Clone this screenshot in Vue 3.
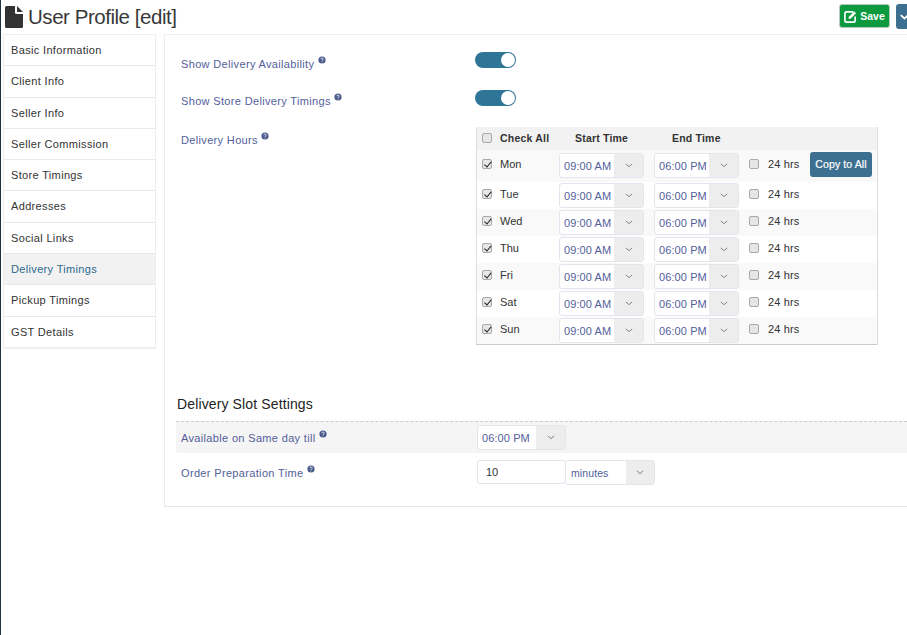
<script setup>
const tabs = ['Basic Information','Client Info','Seller Info','Seller Commission','Store Timings','Addresses','Social Links','Delivery Timings','Pickup Timings','GST Details']
const days = ['Mon','Tue','Wed','Thu','Fri','Sat','Sun']
</script>

<template>
  <div class="page">
    <header class="top">
      <h1 class="title">
        <svg class="file" viewBox="0 0 18 22" width="18" height="22"><path fill="#333" d="M0 1.500A1.500 1.500 0 0 1 1.500 0H10v6.500A1.500 1.500 0 0 0 11.500 8H18v12.500a1.500 1.500 0 0 1-1.500 1.500h-15A1.500 1.500 0 0 1 0 20.500z"/><path fill="#333" d="M12 0l6 6h-6z"/></svg>
        User Profile [edit]
      </h1>
      <div class="actions">
        <button class="save">
          <svg viewBox="0 0 14 14" width="13" height="13"><path fill="none" stroke="#fff" stroke-width="1.800" d="M10 2H2.500A1.500 1.500 0 0 0 1 3.500v8A1.500 1.500 0 0 0 2.500 13h8a1.500 1.500 0 0 0 1.500-1.500V7"/><path fill="#fff" d="M5 7.500L11 1.500l2 2-6 6H5z"/></svg>
          Save
        </button>
        <button class="more">
          <svg viewBox="0 0 12 8" width="11" height="8"><path fill="none" stroke="#fff" stroke-width="2.400" d="M1 1.500l5 4.500 5-4.500"/></svg>
        </button>
      </div>
    </header>

    <div class="body">
      <nav class="side">
        <a v-for="t in tabs" :key="t" class="tab" :class="{ active: t === 'Delivery Timings' }">{{ t }}</a>
      </nav>

      <main class="panel">
        <div class="setting first">
          <label class="lbl">Show Delivery Availability <svg class="q" viewBox="0 0 10 10"><circle cx="5" cy="5" r="4.500" fill="#4a5a8c"/><path d="M3.500 4a1.500 1.400 0 1 1 2.200 1.200Q5 5.600 5 6.200M5 7v1" stroke="#fff" fill="none" stroke-width="1"/></svg></label>
          <span class="toggle"><i></i></span>
        </div>
        <div class="setting second">
          <label class="lbl">Show Store Delivery Timings <svg class="q" viewBox="0 0 10 10"><circle cx="5" cy="5" r="4.500" fill="#4a5a8c"/><path d="M3.500 4a1.500 1.400 0 1 1 2.200 1.200Q5 5.600 5 6.200M5 7v1" stroke="#fff" fill="none" stroke-width="1"/></svg></label>
          <span class="toggle"><i></i></span>
        </div>
        <div class="hours">
          <label class="lbl hlbl">Delivery Hours <svg class="q" viewBox="0 0 10 10"><circle cx="5" cy="5" r="4.500" fill="#4a5a8c"/><path d="M3.500 4a1.500 1.400 0 1 1 2.200 1.200Q5 5.600 5 6.200M5 7v1" stroke="#fff" fill="none" stroke-width="1"/></svg></label>
          <div class="table">
            <div class="thead">
              <span class="c-check"><input type="checkbox" /></span>
              <b class="c-day">Check All</b>
              <b class="c-start">Start Time</b>
              <b class="c-end">End Time</b>
            </div>
            <div v-for="(d, i) in days" :key="d" class="row" :class="{ alt: i % 2 === 0, firstrow: i === 0 }">
              <span class="c-check"><input type="checkbox" checked /></span>
              <span class="c-day dayname">{{ d }}</span>
              <span class="sel s-start"><span class="val">09:00 AM</span><span class="arrow"><svg viewBox="0 0 10 6" width="8" height="5"><path d="M1 1l4 3.500L9 1" fill="none" stroke="#5f6b7a" stroke-width="1"/></svg></span></span>
              <span class="sel s-end"><span class="val">06:00 PM</span><span class="arrow"><svg viewBox="0 0 10 6" width="8" height="5"><path d="M1 1l4 3.500L9 1" fill="none" stroke="#5f6b7a" stroke-width="1"/></svg></span></span>
              <span class="c-check c24"><input type="checkbox" /></span>
              <span class="hrs">24 hrs</span>
              <button v-if="i === 0" class="copy">Copy to All</button>
            </div>
          </div>
        </div>

        <h3 class="slot">Delivery Slot Settings</h3>
        <div class="line same">
          <label class="lbl">Available on Same day till <svg class="q" viewBox="0 0 10 10"><circle cx="5" cy="5" r="4.500" fill="#4a5a8c"/><path d="M3.500 4a1.500 1.400 0 1 1 2.200 1.200Q5 5.600 5 6.200M5 7v1" stroke="#fff" fill="none" stroke-width="1"/></svg></label>
          <span class="sel s-same"><span class="val">06:00 PM</span><span class="arrow"><svg viewBox="0 0 10 6" width="8" height="5"><path d="M1 1l4 3.500L9 1" fill="none" stroke="#5f6b7a" stroke-width="1"/></svg></span></span>
        </div>
        <div class="line prep">
          <label class="lbl">Order Preparation Time <svg class="q" viewBox="0 0 10 10"><circle cx="5" cy="5" r="4.500" fill="#4a5a8c"/><path d="M3.500 4a1.500 1.400 0 1 1 2.200 1.200Q5 5.600 5 6.200M5 7v1" stroke="#fff" fill="none" stroke-width="1"/></svg></label>
          <span class="num">10</span>
          <span class="sel s-min"><span class="val">minutes</span><span class="arrow"><svg viewBox="0 0 10 6" width="8" height="5"><path d="M1 1l4 3.500L9 1" fill="none" stroke="#5f6b7a" stroke-width="1"/></svg></span></span>
        </div>
      </main>
    </div>
  </div>
</template>

<style>
html, body { margin: 0; background: #fff; overflow: hidden; }
</style>

<style scoped>
.page {
  width: 907px; height: 635px; box-sizing: border-box; overflow: hidden;
  border-left: 1px solid #22303f;
  font-family: "Liberation Sans", Arial, sans-serif; font-size: 11px; color: #333;
}
.top { height: 34px; display: flex; justify-content: space-between; box-sizing: border-box; }
.title { margin: 0; padding: 5px 0 0 4px; display: flex; align-items: center; gap: 5px; height: 24px; font-size: 20.500px; font-weight: 400; letter-spacing: -0.460px; color: #383838; white-space: nowrap; }
.file { flex: none; }
.actions { display: flex; gap: 6px; padding-top: 4px; margin-right: -9px; height: 25px; }
.save { width: 51px; height: 24px; box-sizing: border-box; background: #0c9a3f; border: 1px solid #b8c9bd; border-radius: 3px; color: #fff; font: 700 10.500px "Liberation Sans", sans-serif; display: flex; align-items: center; justify-content: center; gap: 3px; padding: 0; }
.more { width: 20px; height: 25px; background: #3d7090; border: 0; border-radius: 3px; padding: 0 7px 0 4px; display: flex; align-items: center; }
.body { display: flex; align-items: flex-start; }
.side { margin-left: 2px; width: 153px; box-sizing: border-box; border: 1px solid #eee; border-bottom-width: 2px; flex: none; display: flex; flex-direction: column; }
.tab { height: 31.300px; box-sizing: border-box; padding: 8.950px 7px 0; border-bottom: 1px solid #e9e9e9; color: #333; white-space: nowrap; letter-spacing: 0.340px; }
.tab:last-child { border-bottom: 0; height: 30.300px; }
.tab.active { background: #f2f2f2; color: #2a6a8e; }
.panel { margin-left: 8px; flex: 1; height: 473px; box-sizing: border-box; border-left: 1px solid #eee; border-bottom: 1px solid #e6e6e6; border-top: 1px solid #eee; padding-left: 16px; position: relative; }
.lbl { color: #53609a; letter-spacing: 0.340px; white-space: nowrap; }
.q { width: 8px; height: 8px; vertical-align: 4px; margin-left: 0; }
.setting { display: flex; }
.setting .lbl { width: 294px; flex: none; line-height: 13px; }
.setting.first { padding-top: 17px; height: 21px; }
.setting.first .lbl { padding-top: 4px; }
.setting.second { padding-top: 17px; height: 21px; }
.setting.second .lbl { padding-top: 3px; }
.toggle { width: 41px; height: 16px; border-radius: 8px; background: #2f7597; position: relative; display: block; }
.toggle i { position: absolute; top: 1px; right: 1.500px; width: 14px; height: 14px; border-radius: 50%; background: #fff; }
.hours { display: flex; margin-top: 16px; }
.hlbl { width: 295px; flex: none; padding-top: 5px; line-height: 13px; }
.table { width: 402px; height: 218px; box-sizing: border-box; border-left: 1px solid #ddd; border-right: 1px solid #ddd; border-bottom: 1px solid #ccc; }
.thead { height: 23px; box-sizing: border-box; padding-bottom: 1px; background: #f2f2f2; display: flex; align-items: center; font-size: 10.500px; color: #333; }
.thead b { letter-spacing: 0.200px; }
.c-check { width: 21px; padding-left: 5px; box-sizing: border-box; flex: none; display: flex; align-items: center; }
.c-check input {
  appearance: none; -webkit-appearance: none; position: relative; box-sizing: border-box;
  width: 10px; height: 10px; margin: 0; border: 1px solid #a9a9a9; border-radius: 2px;
  background: #e6e6e6;
}
.c-check input:checked::after {
  content: ""; position: absolute; left: 2.500px; top: 0; width: 2.500px; height: 5.500px;
  border: solid #222; border-width: 0 1.500px 1.500px 0; transform: rotate(40deg);
}
.c-day { width: 61px; padding-left: 2px; box-sizing: border-box; flex: none; }
.thead .c-day { width: 77px; }
.c-start { width: 97px; flex: none; }
.row { height: 27px; display: flex; align-items: flex-start; position: relative; }
.row.firstrow { height: 32px; }
.row.alt { background: #f9f9f9; }
.row .c-check { height: 24px; }
.row.firstrow .c-check, .row.firstrow .dayname, .row.firstrow .hrs { margin-top: 2px; }
.dayname { line-height: 24px; }
.sel { display: flex; box-sizing: border-box; height: 25px; border: 1px solid #e3e5ee; border-radius: 3px; background: #fff; color: #53609a; align-items: center; flex: none; overflow: hidden; }
.row .sel { margin-top: 1px; }
.row.firstrow .sel { margin-top: 3px; }
.val { flex: 1; padding-left: 4px; letter-spacing: 0.100px; white-space: nowrap; padding-top: 1px; }
.arrow { width: 29px; align-self: stretch; background: #ededed; display: flex; align-items: center; justify-content: center; flex: none; }
.s-start { width: 85px; margin-right: 10px; }
.s-end { width: 85px; margin-right: 9px; }
.c24 { width: 20px; padding-left: 1px; }
.hrs { line-height: 24px; width: 42px; flex: none; letter-spacing: 0.120px; }
.copy { position: absolute; left: 333px; top: 2px; width: 62px; height: 25px; padding: 0 0 2px; border: 0; border-radius: 3px; background: #3d7090; color: #fff; font: 400 10.500px "Liberation Sans", sans-serif; letter-spacing: 0.100px; -webkit-text-stroke: 0.200px #fff; }
.slot { margin: 51px 0 0 -4px; font-size: 14px; font-weight: 400; color: #222; height: 26px; line-height: 16px; letter-spacing: 0.130px; white-space: nowrap; }
.line { display: flex; margin-left: -5px; }
.line .lbl { width: 301px; flex: none; padding-left: 5px; box-sizing: border-box; line-height: 13px; }
.same { height: 31px; margin-top: -1px; border-top: 1px dashed #ccc; background: #f5f5f5; border-radius: 0 0 0 3px; }
.same .lbl { padding-top: 8px; }
.s-same { width: 89px; margin-top: 3px; }
.prep { height: 32px; margin-top: 7px; }
.prep .lbl { padding-top: 5px; }
.num { width: 89px; height: 24px; box-sizing: border-box; border: 1px solid #e3e5ee; border-radius: 3px; color: #333; padding-left: 8px; line-height: 22px; flex: none; }
.s-min { width: 90px; margin-left: -1px; }
.s-min .val { font-size: 10.500px; padding-left: 5px; }
.s-min .arrow { width: 28px; }
</style>
